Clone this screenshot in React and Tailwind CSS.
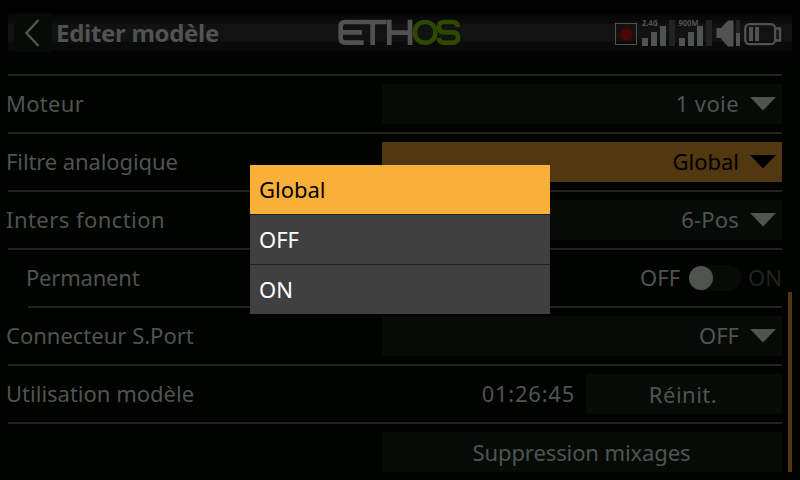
import React from "react";

function Arrow() {
  return (
    <svg className="block h-[14px] w-[26px] shrink-0" viewBox="0 0 26 14">
      <path d="M0 0H26L13 13.5Z" fill="currentColor" />
    </svg>
  );
}

function Field({ value, track = "", active }) {
  return (
    <div
      className={`flex h-10 w-[400px] items-center justify-end pr-[6px] ${
        active ? "bg-[#523811] text-black" : "bg-[#070b08] text-[#505450]"
      }`}
    >
      <span className={`mr-[11px] -mt-[3px] leading-6 ${track}`}>{value}</span>
      <Arrow />
    </div>
  );
}

function Row({ label, track = "", indent, children }) {
  return (
    <div
      className={`flex h-[58px] items-center justify-between border-b-2 border-[#202420] ${
        indent ? "ml-5" : ""
      }`}
    >
      <span className={`-ml-[2px] -mt-[3px] leading-6 ${track}`}>{label}</span>
      {children}
    </div>
  );
}

function Logo() {
  return (
    <svg className="block h-[28px] w-[124px]" viewBox="54 60 372 84" fill="none">
      <g stroke="#515151" strokeWidth="14">
        <path d="M125 69H76Q62 69 62 82V118Q62 131 76 131H131M62 100H126" />
        <path d="M122 69H200M158 69V138M208 62V138M208 101H270M270 62V138" />
      </g>
      <g stroke="#2d4900" strokeWidth="14">
        <rect x="285" y="69" width="61" height="62" rx="29" />
        <path d="M413 84Q413 69 398 69H373Q357 69 357 84Q357 100 373 100H398Q414 100 414 115Q414 131 398 131H373Q357 131 357 117" />
      </g>
    </svg>
  );
}

function StatusIcons() {
  return (
    <svg className="block h-[30px] w-[170px] overflow-visible" viewBox="0 0 170 30" shapeRendering="crispEdges">
      <rect x="3.5" y="5.5" width="21" height="21" fill="none" stroke="#505450" />
      <circle cx="14.5" cy="16.500" r="6.500" fill="#500505" shapeRendering="auto" />
      <path d="M57 2h6v26h-6zM94 2h6v26h-6zM124 2h4v13h-4z" fill="#202420" />
      <g fill="#505450">
        <path d="M30 20h6v8h-6zM39 14h6v14h-6zM48 8h6v20h-6zM67 20h6v8h-6zM76 14h6v14h-6zM85 8h6v20h-6z" />
        <path d="M104.500 10h5v10h-5zM109.500 9.500L116 2.500h5.500v26H116l-6.500-7z" shapeRendering="auto" />
        <path d="M124 15h4v13h-4zM137 9h4v14h-4zM143 9h4v14h-4z" />
        <text x="30" y="8" fontSize="8" fontWeight="700" textLength="16" lengthAdjust="spacingAndGlyphs">2.4G</text>
        <text x="66.500" y="8" fontSize="8" fontWeight="700" textLength="20" lengthAdjust="spacingAndGlyphs">900M</text>
      </g>
      <g fill="none" stroke="#505450" strokeWidth="2.300" shapeRendering="auto">
        <rect x="133.200" y="6.200" width="30" height="20" rx="4.500" />
        <path d="M164 10.500h4v12h-4" />
      </g>
    </svg>
  );
}

export default function App() {
  return (
    <div className="relative h-[480px] w-[800px] overflow-hidden bg-[#000300] font-['Noto_Sans',sans-serif] text-[22px] text-[#505450]">
      <header className="mx-2 flex h-[66px] items-center bg-[linear-gradient(to_bottom,#000300_8px,#000_9px,#020303_15px,#070807_16px,#0b0c0b_23px,#101110_24px,#121312_34px,#101110_41px,#0a0b0a_42px,#080908_50px,#020202_51px,#000300_59px)]">
        <div className="ml-[6px] flex h-[38px] w-[38px] items-center justify-center bg-[#070b08]">
          <svg className="h-[28px] w-[16px]" viewBox="0 0 16 28" fill="none">
            <path d="M13.500 1L1.500 14L13.500 27" stroke="#505450" strokeWidth="2.500" />
          </svg>
        </div>
        <h1 className="ml-[4px] w-[282px] whitespace-nowrap text-[24px] leading-8 font-bold tracking-[-0.3px]">
          Editer modèle
        </h1>
        <Logo />
        <div className="ml-auto mr-[10px]">
          <StatusIcons />
        </div>
      </header>

      <main className="mx-2 mt-[8px] w-[774px] border-t-2 border-[#202420]">
        <Row label="Moteur" track="tracking-[0.3px]">
          <Field value="1 voie" track="tracking-[0.4px]" />
        </Row>
        <Row label="Filtre analogique" track="tracking-[-0.1px]">
          <Field value="Global" active />
        </Row>
        <Row label="Inters fonction" track="tracking-[0.45px]">
          <Field value="6-Pos" track="tracking-[0.2px]" />
        </Row>
        <Row label="Permanent" track="tracking-[-0.2px]" indent>
          <div className="flex items-center">
            <span className="-mt-[3px] leading-6">OFF</span>
            <span className="mr-[7px] ml-[9px] flex h-[26px] w-[52px] items-center rounded-full bg-[#070b08]">
              <span className="h-6 w-6 rounded-full bg-[#505450]" />
            </span>
            <span className="-mt-[3px] leading-6 text-[#202420]">ON</span>
          </div>
        </Row>
        <Row label="Connecteur S.Port">
          <Field value="OFF" />
        </Row>
        <Row label="Utilisation modèle">
          <div className="flex items-center">
            <span className="mr-[11px] -mt-[3px] leading-6 tracking-[0.75px]">01:26:45</span>
            <span className="flex h-10 w-[196px] items-center justify-center bg-[#070b08] pt-px pr-[2px] tracking-[0.5px]">
              Réinit.
            </span>
          </div>
        </Row>
        <div className="flex justify-end pt-2">
          <span className="flex h-10 w-[400px] items-center justify-center bg-[#070b08] pt-px pr-px tracking-[-0.1px]">
            Suppression mixages
          </span>
        </div>
      </main>

      <div className="absolute top-[292px] left-[788px] h-[180px] w-1 bg-[#523811]" />

      <ul className="absolute top-[165px] left-[250px] w-[300px] bg-[#202020] text-white">
        <li className="flex h-[49px] items-center bg-[#f9b038] pb-px pl-[9px] text-black">Global</li>
        <li className="mt-px flex h-[49px] items-center bg-[#404040] pb-px pl-[9px]">OFF</li>
        <li className="mt-px flex h-[49px] items-center bg-[#404040] pb-px pl-[9px]">ON</li>
      </ul>
    </div>
  );
}
